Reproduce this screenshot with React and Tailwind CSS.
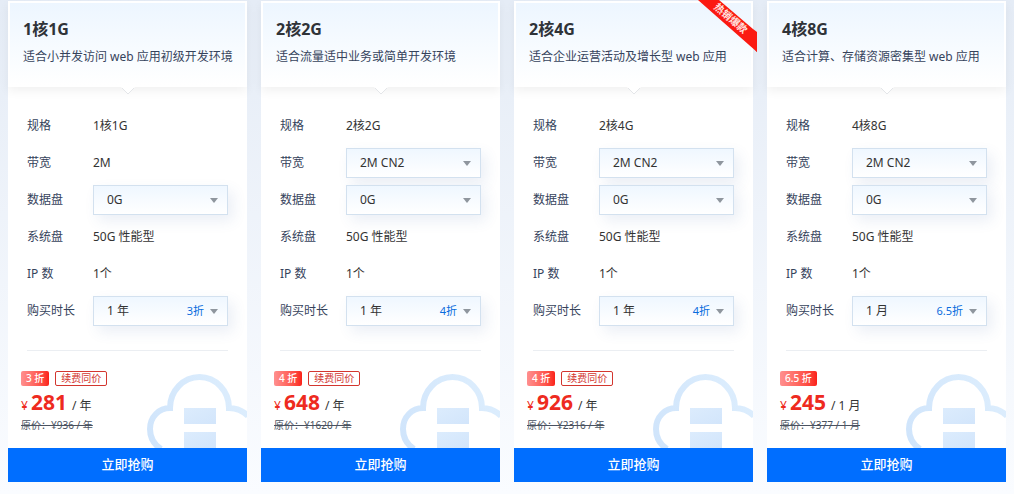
import { useId } from 'react'

const plans = [
  {
    name: '1核1G',
    desc: '适合小并发访问 web 应用初级开发环境',
    bandwidth: '2M',
    duration: '1 年',
    off: '3折',
    badge: '3 折',
    renew: true,
    price: 281,
    unit: '/ 年',
    origin: '原价：¥936 / 年',
  },
  {
    name: '2核2G',
    desc: '适合流量适中业务或简单开发环境',
    bandwidths: ['2M CN2', '5M CN2'],
    duration: '1 年',
    off: '4折',
    badge: '4 折',
    renew: true,
    price: 648,
    unit: '/ 年',
    origin: '原价：¥1620 / 年',
  },
  {
    name: '2核4G',
    desc: '适合企业运营活动及增长型 web 应用',
    bandwidths: ['2M CN2', '5M CN2'],
    duration: '1 年',
    off: '4折',
    badge: '4 折',
    renew: true,
    hot: true,
    price: 926,
    unit: '/ 年',
    origin: '原价：¥2316 / 年',
  },
  {
    name: '4核8G',
    desc: '适合计算、存储资源密集型 web 应用',
    bandwidths: ['2M CN2', '5M CN2'],
    duration: '1 月',
    off: '6.5折',
    badge: '6.5 折',
    price: 245,
    unit: '/ 1 月',
    origin: '原价：¥377 / 1 月',
  },
]

function SelectRow({ label, options, note }) {
  const id = useId()
  return (
    <div className="flex h-[30px] items-center">
      <label htmlFor={id} className="w-[66px] shrink-0 text-[#36435c]">{label}</label>
      <div className="relative flex-1">
        <select
          id={id}
          defaultValue={options[0]}
          className="block h-[30px] w-full appearance-none rounded-none border border-[#d3e1ef] bg-linear-to-b from-[#eff7ff] to-white pl-[13px] pr-12 text-[#333] shadow-[5px_6px_14px_rgba(55,99,170,0.1)] outline-none"
        >
          {options.map((o) => <option key={o}>{o}</option>)}
        </select>
        <div className="pointer-events-none absolute inset-y-0 right-[10px] flex items-center gap-[6px]">
          {note && <span className="text-[11px] text-[#0a6cdd]">{note}</span>}
          <svg width="8" height="5" viewBox="0 0 8 5" fill="#8f969e"><path d="M0 0h8L4 5z" /></svg>
        </div>
      </div>
    </div>
  )
}

function TextRow({ label, value }) {
  return (
    <div className="flex h-[30px] items-center">
      <span className="w-[66px] shrink-0 text-[#36435c]">{label}</span>
      <span className="text-[#333]">{value}</span>
    </div>
  )
}

function HotRibbon() {
  return (
    <div className="absolute -right-1 -top-px h-[52px] w-[59px]">
      <svg className="absolute inset-0" width="59" height="52" viewBox="0 0 59 52">
        <path d="M55 47h4v5z" fill="#b80d0d" />
        <path d="M0 0h21l34 29 4 3v20z" fill="#fb1a12" />
      </svg>
      <span className="absolute left-[11px] top-[11px] w-11 rotate-[41deg] whitespace-nowrap text-center text-[10px] font-bold leading-[14px] text-[#ffe4e0]">
        热销爆款
      </span>
    </div>
  )
}

function CloudArt() {
  const id = useId()
  return (
    <svg className="absolute bottom-0 right-0" width="100" height="76" viewBox="0 0 100 76" fill="none">
      <defs>
        <linearGradient id={`${id}-line`} x1="0" y1="76" x2="90" y2="20" gradientUnits="userSpaceOnUse">
          <stop stopColor="#cfe4fb" />
          <stop offset="1" stopColor="#dcedfd" />
        </linearGradient>
        <linearGradient id={`${id}-box`} x1="0" y1="0" x2="1" y2="1">
          <stop stopColor="#dcecfd" />
          <stop offset="1" stopColor="#d2e5fb" />
        </linearGradient>
      </defs>
      <path
        d="M14 77A24 24 0 0 1 3 57C3 45 12 36 23 36A29.5 31 0 0 1 82 36C90 36 96 39 101 44"
        stroke={`url(#${id}-line)`}
        strokeWidth="6"
      />
      <path d="M37 36h32v16H37z" fill={`url(#${id}-box)`} />
      <path d="M37 60h32v16H37z" fill={`url(#${id}-box)`} />
    </svg>
  )
}

function PlanCard({ plan }) {
  return (
    <section className="relative flex min-w-0 flex-col bg-white">
      {/* Header */}
      <header className="relative h-[86px] border-2 border-white bg-linear-to-b from-[#edf6ff] to-white pl-[13px] pt-[14px] shadow-[0_4px_10px_rgba(0,0,0,0.06)]">
        <h2 className="text-[16px] font-bold leading-6 text-[#2f3338]">{plan.name}</h2>
        <p className="mt-[6px] whitespace-nowrap leading-[20px] text-[#36435c]">{plan.desc}</p>
        <svg className="absolute -bottom-[10px] left-1/2 -translate-x-1/2" width="14" height="8" viewBox="0 0 14 8">
          <path d="M0 0h14L7 7z" fill="#fff" />
          <path d="M1 1l6 6 6-6" fill="none" stroke="#e4e6e9" />
        </svg>
      </header>
      {plan.hot && <HotRibbon />}

      {/* Specs */}
      <div className="mx-[19px] flex flex-col gap-[7px] border-b border-[#ebeef2] py-6">
        <TextRow label="规格" value={plan.name} />
        {plan.bandwidths
          ? <SelectRow label="带宽" options={plan.bandwidths} />
          : <TextRow label="带宽" value={plan.bandwidth} />}
        <SelectRow label="数据盘" options={['0G', '50G', '100G']} />
        <TextRow label="系统盘" value="50G 性能型" />
        <TextRow label="IP 数" value="1个" />
        <SelectRow label="购买时长" options={[plan.duration]} note={plan.off} />
      </div>

      {/* Price */}
      <div className="relative px-[13px] pb-4 pt-5">
        <CloudArt />
        <div className="relative">
          <div className="flex gap-[6px] text-[10px] leading-[15px]">
            <span className="rounded-[2px] bg-linear-to-r from-[#ff8f8f] to-[#fb2018] px-[5px] font-medium text-white">{plan.badge}</span>
            {plan.renew && (
              <span className="rounded-[2px] border border-[#d3362f] px-[5px] leading-[13px] text-[#d3362f]">续费同价</span>
            )}
          </div>
          <div className="flex h-8 items-baseline leading-8 text-[#333]">
            <span className="mr-[3px] text-[#ee2a20]">¥</span>
            <strong className="mr-[5px] text-[21px] font-bold text-[#ee2a20]">{plan.price}</strong>
            <span>{plan.unit}</span>
          </div>
          <del className="block text-[10px] leading-[14px] text-[#4a5260]">{plan.origin}</del>
        </div>
      </div>

      <button type="button" className="h-[34px] w-full cursor-pointer bg-[#006eff] text-[13px] font-medium text-white hover:bg-[#0062e3]">
        立即抢购
      </button>
    </section>
  )
}

export default function App() {
  return (
    <main className="min-h-screen bg-linear-to-b from-[#e5ecf6] to-[#fafcff] px-2 pb-3 pt-px font-['Noto_Sans','Noto_Sans_CJK_SC',sans-serif] text-[12px]">
      <div className="grid grid-cols-4 gap-[14px]">
        {plans.map((p) => <PlanCard key={p.name} plan={p} />)}
      </div>
    </main>
  )
}
